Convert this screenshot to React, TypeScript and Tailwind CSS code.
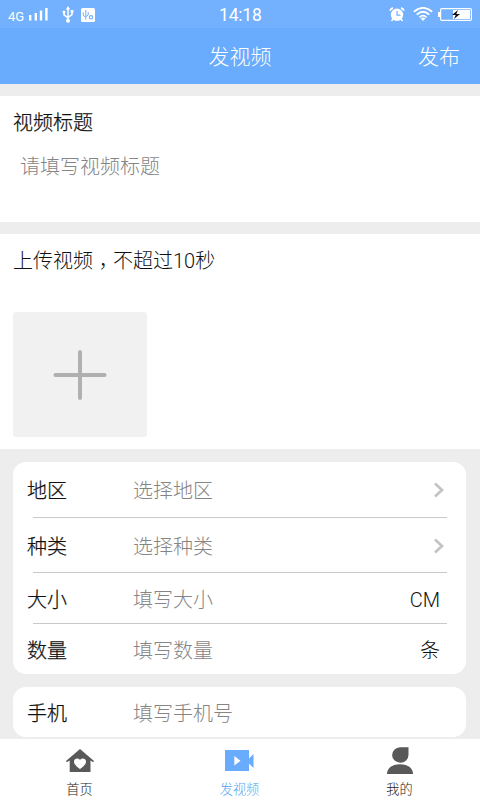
import type { ReactNode } from 'react';

interface FieldRowProps {
  label: string;
  placeholder: string;
  height: string;
  last?: boolean;
  children?: ReactNode;
}

function ChevronRight() {
  return (
    <svg className="w-[10px] h-4 mr-[-4px] mb-[2px]" viewBox="0 0 10 16" fill="none" stroke="#c4c4c4" strokeWidth="2.8">
      <path d="M1 1.5 8 8 1 14.5" />
    </svg>
  );
}

// Status bar
function StatusBar() {
  return (
    <div className="h-7 shrink-0 bg-[#73b0fd] text-white flex items-center relative">
      <span className="ml-[8px] mt-[5px] w-[18px] text-[13px] leading-none">4G</span>
      <svg className="ml-[2px] w-5 h-[14px]" viewBox="0 0 20 14" fill="#fff">
        <rect x="1" y="8" width="2.4" height="5.5" />
        <rect x="6.6" y="6" width="2.4" height="7.5" />
        <rect x="11.8" y="3.5" width="2.4" height="10" />
        <rect x="17.2" y="1" width="2.4" height="12.5" />
      </svg>
      {/* USB */}
      <svg className="ml-[14px] w-3 h-[17px]" viewBox="0 0 12 17" fill="none" stroke="#fff" strokeWidth="1.5">
        <path d="M6 2v13M2 6v2.8l4 3M10 5v3.5l-4 3" />
        <path d="M6 0 8.2 3.5H3.8z" fill="#fff" stroke="none" />
        <circle cx="6" cy="14.7" r="2" fill="#fff" stroke="none" />
        <circle cx="2" cy="6" r="1.5" fill="#fff" stroke="none" />
        <path d="M8.6 4h2.8v2.8H8.6z" fill="#fff" stroke="none" />
      </svg>
      {/* USB debugging */}
      <svg className="ml-[7px] mt-[1px] w-[14px] h-[14px]" viewBox="0 0 14 14" fill="none" stroke="#73b0fd">
        <rect width="14" height="14" rx="1.5" fill="#fff" stroke="none" />
        <path d="M4.8 2v9.5M2.3 4.5v3l2.5 1.6M7.2 4v3L4.8 8.7" />
        <circle cx="10" cy="9.3" r="1.7" strokeWidth="1.2" />
      </svg>
      <span className="absolute left-[219px] top-[5px] text-[17.5px] leading-5 tracking-[-0.2px]">14:18</span>
      <div className="ml-auto mr-2 flex items-center">
        {/* Alarm */}
        <svg className="w-4 h-[15px]" viewBox="0 0 16 15" fill="none" stroke="#fff">
          <circle cx="8" cy="7.8" r="6.2" fill="#fff" stroke="none" />
          <path d="M1 3.8Q1.7 1.7 4 .9M15 3.8Q14.3 1.7 12 .9" strokeWidth="1.7" />
          <path d="m4 12-1.5 2M12 12l1.5 2" strokeWidth="1.5" />
          <path d="M8 4v4.2h3.4" stroke="#73b0fd" strokeWidth="1.2" />
        </svg>
        {/* Wifi */}
        <svg className="ml-[8px] w-5 h-[14px]" viewBox="0 0 20 14" fill="none" stroke="#fff" strokeWidth="1.8">
          <path d="M.8 4.7Q10-3 19.2 4.7M3.7 7.6Q10 2 16.3 7.6M6.5 10.3Q10 7 13.5 10.3" />
          <path d="M10 14 7.6 11.4Q10 9.8 12.4 11.4z" fill="#fff" stroke="none" />
        </svg>
        {/* Battery */}
        <svg className="ml-[5px] w-[34px] h-[13px]" viewBox="0 0 34 13" fill="none">
          <rect x="2.6" y=".6" width="30.8" height="11.8" rx="1.2" stroke="#fff" strokeWidth="1.2" />
          <rect x="0" y="4" width="2" height="5" fill="#fff" />
          <rect x="15" y="2" width="17" height="9" fill="#fff" />
          <path d="m20 2-6 5h3.7L16 11l6-5h-3.7z" fill="#111" />
        </svg>
      </div>
    </div>
  );
}

function FieldRow({ label, placeholder, height, last, children }: FieldRowProps) {
  return (
    <div className={height}>
      <div className="h-full flex flex-col">
        <div className="flex-1 flex items-center pt-[3px] pl-[14px] pr-[26px]">
          <span className="w-[106px] text-[#111] font-light [-webkit-text-stroke:0.25px]">{label}</span>
          <span className="flex-1 text-[#858585] font-light">{placeholder}</span>
          <span className="text-[#111] font-light">{children}</span>
        </div>
        {!last && <div className="h-px ml-5 mr-[19px] bg-[#c9c9c9]" />}
      </div>
    </div>
  );
}

function TabItem({ label, active, children }: { label: string; active?: boolean; children: ReactNode }) {
  return (
    <div className={`flex-1 flex flex-col items-center ${active ? 'text-[#5a9ff2]' : 'text-[#222]'}`}>
      <div className="h-[29px] mt-[8px]">{children}</div>
      <span className="mt-[6px] mr-px text-[13.2px] leading-4 font-light">{label}</span>
    </div>
  );
}

export default function App() {
  return (
    <div className="w-[480px] h-[800px] overflow-hidden flex flex-col bg-[#ededed] font-['Roboto','Noto_Sans_CJK_SC',sans-serif] text-[20px] leading-6">
      <StatusBar />

      {/* Header */}
      <div className="h-14 shrink-0 bg-[#69abfc] text-white font-light grid grid-cols-[1fr_auto_1fr] items-center text-[21px] pt-[2px]">
        <span />
        <h1>发视频</h1>
        <span className="text-right pr-5">发布</span>
      </div>

      {/* Title */}
      <div className="mt-3 h-[126px] shrink-0 bg-white pt-[15px]">
        <div className="pl-[13px] text-[#111] font-light [-webkit-text-stroke:0.25px]">视频标题</div>
        <div className="mt-5 pl-5 text-[#858585] font-light">请填写视频标题</div>
      </div>

      {/* Upload */}
      <div className="mt-3 h-[215px] shrink-0 bg-white pt-[15px] pl-[13px]">
        <div className="h-6 text-[#111] font-light flex">
          <span>上传视频</span>
          <span className="mt-[5px] font-['Noto_Sans_CJK_TC',sans-serif]">，</span>
          <span>不超过10秒</span>
        </div>
        <div className="mt-[39px] w-[134px] h-[125px] rounded-[3px] bg-[#f1f1f1] flex items-center justify-center">
          <svg className="w-[54px] h-[52px]" viewBox="0 0 54 52" stroke="#b0b0b0" strokeWidth="4" strokeLinecap="round">
            <path d="M2.5 26h49M27 3v46" />
          </svg>
        </div>
      </div>

      {/* Details */}
      <div className="mt-[13px] ml-[13px] mr-[14px] h-[212px] shrink-0 bg-white rounded-[13px]">
        <FieldRow label="地区" placeholder="选择地区" height="h-14">
          <ChevronRight />
        </FieldRow>
        <FieldRow label="种类" placeholder="选择种类" height="h-[55px]">
          <ChevronRight />
        </FieldRow>
        <FieldRow label="大小" placeholder="填写大小" height="h-[51px]">CM</FieldRow>
        <FieldRow label="数量" placeholder="填写数量" height="h-[50px]" last>条</FieldRow>
      </div>
      <div className="mt-[13px] ml-[13px] mr-[14px] h-[50px] shrink-0 bg-white rounded-[13px]">
        <FieldRow label="手机" placeholder="填写手机号" height="h-[50px]" last />
      </div>

      {/* Tab bar */}
      <div className="mt-[2px] h-[61px] shrink-0 bg-white flex">
        <TabItem label="首页">
          <svg className="w-[28px] h-[26px] mr-px" viewBox="0 0 28 26" fill="#595959">
            <path d="M14 2 0 14l.8 1.3 2.9-1.8V25h20.8V13.5l2.7 1.8.8-1.3z" />
            <path d="M14 22c-2-1.6-6-4.2-6-7.3 0-3.6 4.5-4.2 6-1.7 1.5-2.5 6-1.9 6 1.7 0 3.1-4 5.7-6 7.3z" fill="#fff" />
          </svg>
        </TabItem>
        <TabItem label="发视频" active>
          <svg className="w-[29px] h-[26px] mr-[2px]" viewBox="0 0 29 26" fill="#69abfc">
            <path d="M0 3h24v8.5L28.500 7v14L24 16.500V24H0z" />
            <path d="m9.300 9 6.200 4.800-6.200 4.800z" fill="#fff" />
          </svg>
        </TabItem>
        <TabItem label="我的">
          <svg className="w-[26px] h-[28px] mr-px" viewBox="0 0 26 28" fill="#595959">
            <path d="M13 .3h8.500V8A8.200 7.700 0 1 1 13 .3z" />
            <path d="M0 27C0 21.500 4.500 17.200 13 17.200s13 4.300 13 9.800z" />
          </svg>
        </TabItem>
      </div>
    </div>
  );
}
